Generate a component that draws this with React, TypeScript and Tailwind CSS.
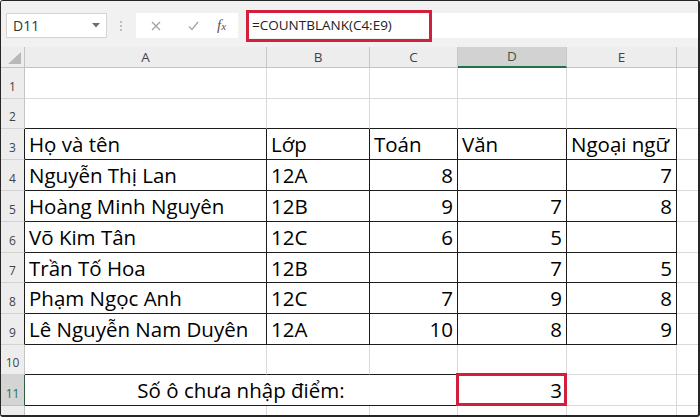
import React from "react";

const COL_W = ["w-[242px]", "w-[103px]", "w-[88px]", "w-[109px]", "w-[110px]"];
const ROW_H = ["h-[31px]", "h-[30px]", "h-[31px]", "h-[31px]", "h-[31px]", "h-[31px]", "h-[30px]", "h-[31px]", "h-[31px]", "h-[30px]", "h-[31px]"];

const DATA: string[][] = [
  ["", "", "", "", ""],
  ["", "", "", "", ""],
  ["Họ và tên", "Lớp", "Toán", "Văn", "Ngoại ngữ"],
  ["Nguyễn Thị Lan", "12A", "8", "", "7"],
  ["Hoàng Minh Nguyên", "12B", "9", "7", "8"],
  ["Võ Kim Tân", "12C", "6", "5", ""],
  ["Trần Tố Hoa", "12B", "", "7", "5"],
  ["Phạm Ngọc Anh", "12C", "7", "9", "8"],
  ["Lê Nguyễn Nam Duyên", "12A", "10", "8", "9"],
  ["", "", "", "", ""],
];

const GRID = "border-r-[#dadada]";
const GRID_B = "border-b-[#dadada]";
const INK = "border-r-[#1c1c1c]";
const INK_B = "border-b-[#1c1c1c]";

function RowHead({ n, active, ink }: { n: number; active?: boolean; ink?: boolean }) {
  return (
    <div
      className={`w-[24px] shrink-0 box-border border-r border-b flex items-end justify-center pb-[5px] text-[12px] leading-none ${
        active
          ? "bg-[#d4d4d4] text-[#217346] border-r-[#2e5c40] border-b-[#bfbfbf]"
          : `bg-[#ededed] text-[#444] border-b-[#d3d3d3] ${ink ? "border-r-[#1c1c1c]" : "border-r-[#c4c4c4]"}`
      }`}
    >
      {n}
    </div>
  );
}

export default function App() {
  return (
    <div
      className="w-[700px] h-[417px] box-border overflow-hidden bg-white border-t border-l border-r-2 border-b-2 border-[#262626] rounded-[3px] flex flex-col"
      style={{ fontFamily: '"Open Sans", "Noto Sans", sans-serif' }}
    >
      {/* Formula bar */}
      <div className="h-[46px] shrink-0 bg-[#f1f1f1] flex items-start pt-[12px]">
        <div className="ml-[5px] w-[101px] h-[25px] box-border bg-white border border-[#d4d4d4] flex items-center justify-between pl-[6px] pr-[6px]">
          <span className="text-[14px] text-[#333]">D11</span>
          <svg width="8" height="5" viewBox="0 0 8 5">
            <path d="M0 0 L8 0 L4 4.5 Z" fill="#6e6e6e" />
          </svg>
        </div>
        <div className="ml-[13px] mt-[8px] flex flex-col gap-[2px]">
          <span className="w-[2px] h-[2px] bg-[#bdbdbd]" />
          <span className="w-[2px] h-[2px] bg-[#bdbdbd]" />
          <span className="w-[2px] h-[2px] bg-[#bdbdbd]" />
        </div>
        <div className="ml-[14px] w-[102px] h-[25px] bg-white flex items-center">
          <svg className="ml-[15px]" width="10" height="10" viewBox="0 0 10 10">
            <path d="M1 1 L9 9 M9 1 L1 9" stroke="#a3a3a3" strokeWidth="1.4" />
          </svg>
          <svg className="ml-[27px]" width="11" height="10" viewBox="0 0 11 10">
            <path d="M1 5.5 L4 8.5 L10 1" stroke="#a8a8a8" strokeWidth="1.4" fill="none" />
          </svg>
          <span
            className="ml-[18px] italic text-[15px] text-[#555] leading-none"
            style={{ fontFamily: '"Liberation Serif", serif' }}
          >
            f<span className="text-[11px]">x</span>
          </span>
        </div>
        <div className="ml-[8px] flex-1 h-[25px] bg-white flex items-center">
          <div className="w-[186px] h-[32px] shrink-0 box-border border-[3px] border-[#d21f3c] flex items-center pl-[3px] text-[13.5px] text-[#222] whitespace-nowrap">
            =COUNTBLANK(C4:E9)
          </div>
        </div>
      </div>

      {/* Column headers */}
      <div className="h-[21px] shrink-0 flex bg-[#ededed] text-[13.5px] text-[#444]">
        <div className="w-[24px] shrink-0 box-border border-r border-b border-[#c4c4c4] flex items-end justify-end p-[3px]">
          <svg width="13" height="12" viewBox="0 0 13 12">
            <path d="M13 0 L13 12 L0 12 Z" fill="#b8b8b8" />
          </svg>
        </div>
        {["A", "B", "C", "D", "E"].map((l, i) => (
          <div
            key={l}
            className={`${COL_W[i]} shrink-0 box-border border-r border-r-[#c8c8c8] flex items-center justify-center ${
              l === "D" ? "bg-[#d2d2d2] border-b-2 border-b-[#217346] text-[#3b5747]" : "border-b border-b-[#c4c4c4]"
            }`}
          >
            {l}
          </div>
        ))}
        <div className="flex-1 box-border border-b border-b-[#c4c4c4]" />
      </div>

      {/* Rows 1-10 */}
      {DATA.map((row, r) => {
        const n = r + 1;
        const inTable = n >= 3 && n <= 9;
        return (
          <div key={n} className={`${ROW_H[r]} shrink-0 flex`}>
            <RowHead n={n} ink={inTable} />
            {row.map((v, c) => {
              const num = n >= 4 && c >= 2;
              const br = inTable ? INK : GRID;
              const bb = inTable || (n === 2 && c <= 4) || (n === 10 && c <= 2) ? INK_B : GRID_B;
              return (
                <div
                  key={c}
                  className={`${COL_W[c]} shrink-0 box-border border-r border-b ${br} ${bb} flex items-center px-[4px] text-[20.5px] leading-[20px] text-black whitespace-nowrap ${
                    num ? "justify-end" : "justify-start"
                  }`}
                >
                  {v}
                </div>
              );
            })}
            <div className="flex-1 box-border border-b border-b-[#dadada]" />
          </div>
        );
      })}

      {/* Row 11 */}
      <div className={`${ROW_H[10]} shrink-0 flex`}>
        <RowHead n={11} active />
        <div className="w-[433px] shrink-0 box-border border-r border-b border-r-[#1c1c1c] border-b-[#1c1c1c] flex items-center justify-center text-[20.5px] leading-[20px] text-black whitespace-nowrap">
          Số ô chưa nhập điểm:
        </div>
        <div className="w-[109px] shrink-0 box-border border-r border-b border-r-[#dadada] border-b-[#dadada] relative flex items-center justify-end px-[4px] text-[20.5px] leading-[20px] text-black">
          3
          <div className="absolute -left-[2px] -top-[2px] -right-[1px] -bottom-[1px] border-[3px] border-[#d21f3c]" />
        </div>
        <div className="w-[110px] shrink-0 box-border border-r border-b border-r-[#dadada] border-b-[#dadada]" />
        <div className="flex-1 box-border border-b border-b-[#dadada]" />
      </div>

      {/* Row 12 (partial) */}
      <div className="flex-1 flex">
        <div className="w-[24px] shrink-0 box-border border-r border-[#c4c4c4] bg-[#ededed]" />
        <div className="w-[242px] shrink-0 box-border border-r border-r-[#dadada]" />
        <div className="w-[103px] shrink-0 box-border border-r border-r-[#dadada]" />
        <div className="w-[88px] shrink-0 box-border border-r border-r-[#dadada]" />
        <div className="w-[109px] shrink-0 box-border border-r border-r-[#dadada]" />
        <div className="w-[110px] shrink-0 box-border border-r border-r-[#dadada]" />
        <div className="flex-1" />
      </div>
    </div>
  );
}
